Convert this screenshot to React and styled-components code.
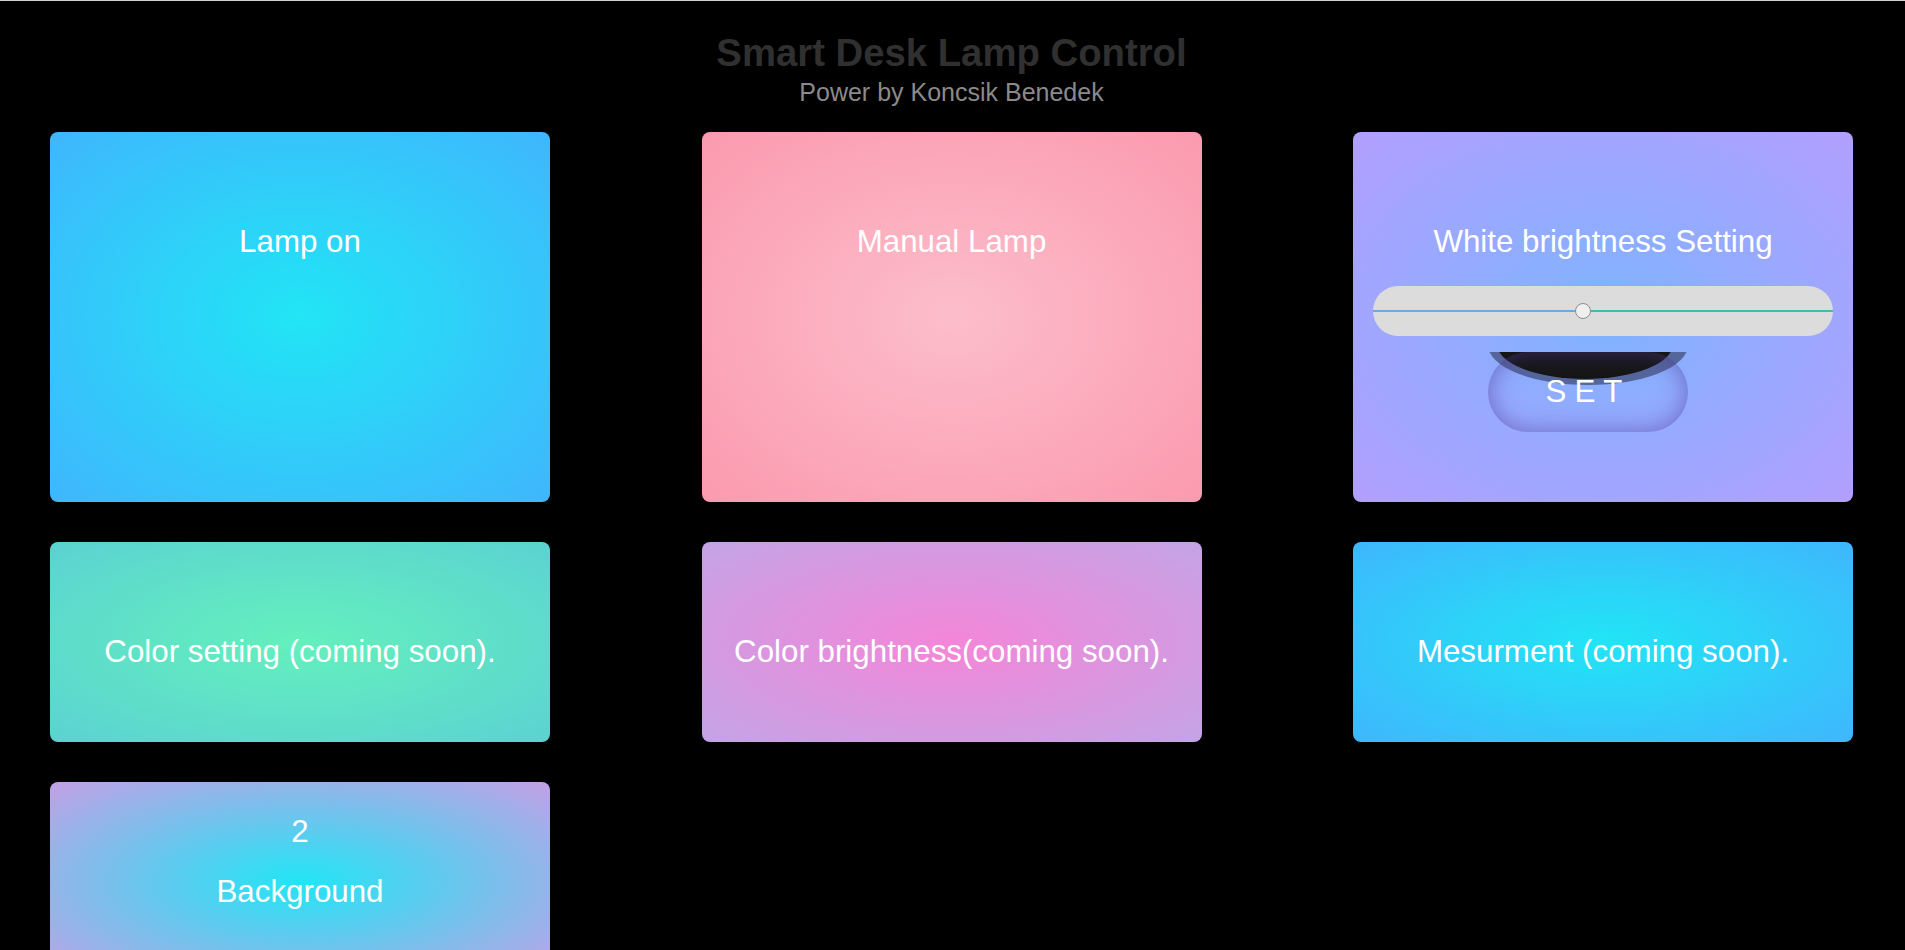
import React, { useState } from "react";
import styled, { createGlobalStyle } from "styled-components";

const GlobalStyle = createGlobalStyle`
  html, body {
    margin: 0;
    padding: 0;
    background: #000;
    font-family: "Liberation Sans", Arial, sans-serif;
  }
  ::-webkit-scrollbar {
    width: 2px;
    background: #0e0e0e;
  }
  ::-webkit-scrollbar-thumb {
    background: #777;
  }
`;

const Page = styled.div`
  border-top: 1px solid #d2d2d2;
  padding: 0 52px 58px 50px;
  min-height: 100vh;
  box-sizing: border-box;
`;

const Header = styled.header`
  text-align: center;
  padding-top: 30px;
  margin-bottom: 25px;
`;

const Title = styled.h1`
  margin: 0;
  font-size: 38.3px;
  line-height: 44px;
  font-weight: bold;
  color: #303030;
`;

const Subtitle = styled.p`
  margin: 3px 0 0;
  font-size: 25px;
  line-height: 29px;
  color: #8a8a8a;
`;

const Grid = styled.main`
  display: grid;
  grid-template-columns: repeat(3, 500px);
  justify-content: space-between;
  row-gap: 40px;
`;

const Card = styled.section`
  height: ${(p) => p.$height}px;
  box-sizing: border-box;
  padding: ${(p) => p.$top || 92}px 20px 0;
  border-radius: 8px;
  background: radial-gradient(ellipse at center, ${(p) => p.$center} 0%, ${(p) => p.$edge} 100%);
  display: flex;
  flex-direction: column;
  align-items: center;
  color: #fff;
  overflow: hidden;
`;

const CardTitle = styled.h2`
  margin: 0;
  font-size: 31.3px;
  line-height: 36px;
  font-weight: normal;
  text-align: center;
  cursor: ${(p) => (p.$clickable ? "pointer" : "default")};
`;

const Counter = styled.div`
  font-size: 31.3px;
  line-height: 36px;
  margin-bottom: 24px;
`;

const SliderBox = styled.div`
  width: 100%;
  margin-top: 26px;
`;

const Range = styled.input`
  -webkit-appearance: none;
  appearance: none;
  display: block;
  width: 100%;
  height: 50px;
  margin: 0;
  border-radius: 25px;
  background: #dcdcdc;
  outline: none;

  &::-webkit-slider-runnable-track {
    height: 2px;
    background: linear-gradient(
      to right,
      #6eaae2 0%,
      #6eaae2 var(--split),
      #3ebdb1 var(--split),
      #3ebdb1 100%
    );
  }
  &::-webkit-slider-thumb {
    -webkit-appearance: none;
    appearance: none;
    width: 16px;
    height: 16px;
    margin-top: -7px;
    border-radius: 50%;
    background: #efefef;
    border: 1px solid #8f8f8f;
    box-sizing: border-box;
  }
`;

const SetWrap = styled.div`
  position: relative;
  width: 200px;
  height: 80px;
  margin: 16px 30px 0 0;
  overflow: hidden;
`;

const SetButton = styled.button`
  width: 100%;
  height: 100%;
  border: none;
  border-radius: 40px;
  background: transparent;
  box-shadow: inset 0 0 24px rgba(80, 60, 150, 0.6);
  color: #fff;
  font-family: inherit;
  font-size: 31.3px;
  letter-spacing: 8px;
  padding: 0;
  cursor: pointer;
  position: relative;
  z-index: 2;
`;

const Shade = styled.span`
  position: absolute;
  left: ${(p) => p.$left}px;
  top: ${(p) => p.$top}px;
  width: ${(p) => p.$w}px;
  height: ${(p) => p.$h}px;
  border-radius: 50%;
  background: ${(p) => p.$color};
  z-index: 1;
  pointer-events: none;
`;

const MAX = 255;

function BrightnessCard() {
  const [value, setValue] = useState(116);
  const split = ((8 + (value / MAX) * 444) / 460) * 100;

  return (
    <Card $height={370} $center="#7eb3ff" $edge="#b39ffe">
      <CardTitle>White brightness Setting</CardTitle>
      <SliderBox>
        <Range
          type="range"
          min="0"
          max={MAX}
          value={value}
          onChange={(e) => setValue(Number(e.target.value))}
          style={{ "--split": `${split}%` }}
        />
      </SliderBox>
      <SetWrap>
        <Shade $left={0} $top={-47} $w={200} $h={80} $color="rgba(30, 30, 60, 0.5)" />
        <Shade $left={9} $top={-43} $w={176} $h={70} $color="#151515" />
        <SetButton onClick={() => console.log("set", value)}>SET</SetButton>
      </SetWrap>
    </Card>
  );
}

function App() {
  const [lamp, setLamp] = useState(true);

  return (
    <Page>
      <GlobalStyle />
      <Header>
        <Title>Smart Desk Lamp Control</Title>
        <Subtitle>Power by Koncsik Benedek</Subtitle>
      </Header>
      <Grid>
        <Card $height={370} $center="#21e5f5" $edge="#3fb6fd">
          <CardTitle $clickable onClick={() => setLamp(!lamp)}>
            {lamp ? "Lamp on" : "Lamp off"}
          </CardTitle>
        </Card>
        <Card $height={370} $center="#fcbdca" $edge="#fb9aaf">
          <CardTitle>Manual Lamp</CardTitle>
        </Card>
        <BrightnessCard />
        <Card $height={200} $center="#64f0bd" $edge="#5bd2d2">
          <CardTitle>Color setting (coming soon).</CardTitle>
        </Card>
        <Card $height={200} $center="#f486d8" $edge="#c3a4e6">
          <CardTitle>Color brightness(coming soon).</CardTitle>
        </Card>
        <Card $height={200} $center="#21e5f5" $edge="#3fb6fd">
          <CardTitle>Mesurment (coming soon).</CardTitle>
        </Card>
        <Card $height={200} $top={32} $center="#21e5f5" $edge="#c4a0e5">
          <Counter>2</Counter>
          <CardTitle>Background</CardTitle>
        </Card>
      </Grid>
    </Page>
  );
}

export default App;
